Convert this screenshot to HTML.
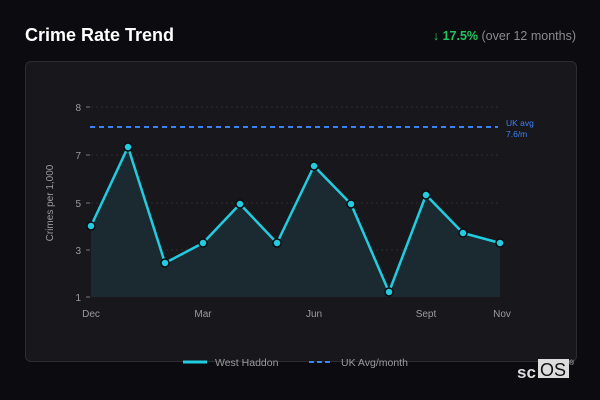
<!DOCTYPE html>
<html><head><style>
body{margin:0;width:600px;height:400px;background:#0c0c10;font-family:"Liberation Sans",sans-serif;overflow:hidden;position:relative}
.t{position:absolute;left:25px;top:25px;color:#fff;font-weight:bold;font-size:18px}
.r{position:absolute;right:24px;top:29px;font-size:12.5px;color:#8a8a90}
.r b{color:#22c55e}
.card{position:absolute;left:25px;top:61px;width:550px;height:299px;background:#17171c;border:1px solid #2c2c32;border-radius:6px}
svg{position:absolute;left:0;top:0}
</style></head><body>
<div class="t">Crime Rate Trend</div>
<div class="r"><b>↓ 17.5%</b> (over 12 months)</div>
<div class="card"></div>
<svg width="600" height="400" font-family="Liberation Sans, sans-serif">
<g stroke="#2e2e34" stroke-dasharray="2,3" stroke-width="1">
<line x1="91" y1="107" x2="500" y2="107"/><line x1="91" y1="155" x2="500" y2="155"/><line x1="91" y1="203" x2="500" y2="203"/><line x1="91" y1="250" x2="500" y2="250"/>
</g>
<g stroke="#777" stroke-width="1"><line x1="86" y1="107" x2="90" y2="107"/><line x1="86" y1="155" x2="90" y2="155"/><line x1="86" y1="203" x2="90" y2="203"/><line x1="86" y1="250" x2="90" y2="250"/><line x1="86" y1="297" x2="90" y2="297"/></g>
<g fill="#9a9aa0" font-size="10" text-anchor="end"><text x="81" y="111">8</text><text x="81" y="159">7</text><text x="81" y="207">5</text><text x="81" y="254">3</text><text x="81" y="301">1</text></g>
<g fill="#9a9aa0" font-size="10" text-anchor="middle"><text x="91" y="317">Dec</text><text x="203" y="317">Mar</text><text x="314" y="317">Jun</text><text x="426" y="317">Sept</text><text x="502" y="317">Nov</text></g>
<text x="0" y="0" transform="translate(53,203) rotate(-90)" text-anchor="middle" font-size="10" fill="#9a9aa0">Crimes per 1,000</text>
<path d="M91,226 L128,147 L165,263 L203,243 L240,204 L277,243 L314,166 L351,204 L389,292 L426,195 L463,233 L500,243 L500,297 L91,297Z" fill="#1a2a30"/>
<line x1="90" y1="127" x2="498" y2="127" stroke="#3b82f6" stroke-width="2" stroke-dasharray="5,4"/>
<text x="506" y="126" font-size="8.5" fill="#3b82f6">UK avg</text><text x="506" y="137" font-size="8.5" fill="#3b82f6">7.6/m</text>
<polyline points="91,226 128,147 165,263 203,243 240,204 277,243 314,166 351,204 389,292 426,195 463,233 500,243" fill="none" stroke="#22cce0" stroke-width="2.5" stroke-linejoin="round"/>
<g fill="#22cce0" stroke="#0c0c10" stroke-width="1.5">
<circle cx="91" cy="226" r="4"/><circle cx="128" cy="147" r="4"/><circle cx="165" cy="263" r="4"/><circle cx="203" cy="243" r="4"/><circle cx="240" cy="204" r="4"/><circle cx="277" cy="243" r="4"/><circle cx="314" cy="166" r="4"/><circle cx="351" cy="204" r="4"/><circle cx="389" cy="292" r="4"/><circle cx="426" cy="195" r="4"/><circle cx="463" cy="233" r="4"/><circle cx="500" cy="243" r="4"/>
</g>
<line x1="183" y1="362" x2="207" y2="362" stroke="#22cce0" stroke-width="3"/>
<text x="215" y="366" font-size="10.5" fill="#9a9aa0">West Haddon</text>
<line x1="309" y1="362" x2="333" y2="362" stroke="#3b82f6" stroke-width="2" stroke-dasharray="5,3"/>
<text x="341" y="366" font-size="10.5" fill="#9a9aa0">UK Avg/month</text>
<text x="517" y="378" font-size="17" font-weight="bold" fill="#ddd">sc</text>
<rect x="538" y="359" width="31" height="19" fill="#ddd"/>
<text x="540" y="376" font-size="18" fill="#111">OS</text>
<text x="569" y="365" font-size="7" fill="#ccc">®</text>
</svg>
</body></html>
